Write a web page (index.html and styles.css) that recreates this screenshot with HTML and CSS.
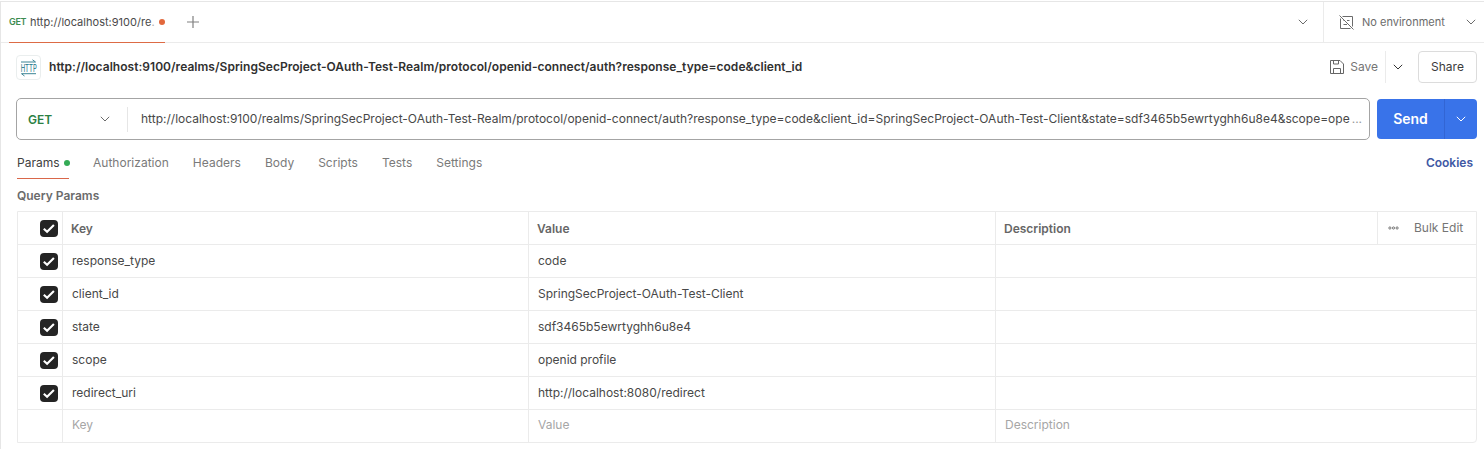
FILE: index.html
```html
<!DOCTYPE html>
<html lang="en">
<head>
<meta charset="utf-8">
<title>Request</title>
<link rel="stylesheet" href="styles.css">
</head>
<body>
<svg class="sprite" aria-hidden="true">
  <symbol id="chevron" viewBox="0 0 10 6"><path d="M.8.8 5 5 9.2.8" fill="none" stroke="currentColor"/></symbol>
  <symbol id="check" viewBox="0 0 17 17"><path d="M3.3 8.7 6.6 11.8 13.4 5" fill="none" stroke="#fff" stroke-width="2.1"/></symbol>
</svg>
<div class="app">
  <header class="tabbar">
    <div class="tab"><span class="tab-method">GET</span><span class="tab-name">http://localhost:9100/re<span class="fade">.</span></span><i class="unsaved"></i></div>
    <svg class="plus" viewBox="0 0 12 12"><path d="M6 0v12M0 6h12" stroke="currentColor" stroke-width="1.2"/></svg>
    <svg class="chev tabs-chev"><use href="#chevron"/></svg>
    <div class="env">
      <svg class="env-icon" viewBox="0 0 15 15" fill="none" stroke="currentColor"><path d="M3.5 1.5h10v10M11.5 13.5h-10V3.5M.5.5l14 14M4.5 5.5h1M8 5.5h2.5M4.5 9.5H8"/></svg>
      <span class="env-name">No environment</span>
      <svg class="chev"><use href="#chevron"/></svg>
    </div>
  </header>

  <section class="titlebar">
    <div class="http-icon"><svg viewBox="0 0 25 25"><path d="M5 7h14.5M16.5 4.8 19.5 7M20 18.700H5.500M8.500 21 5.500 18.700" fill="none" stroke="#3b8494"/><text x="12.700" y="16.700" text-anchor="middle" textLength="16" lengthAdjust="spacingAndGlyphs">HTTP</text></svg></div>
    <h1 class="title">http://localhost:9100/realms/SpringSecProject-OAuth-Test-Realm/protocol/openid-connect/auth?response_type=code&amp;client_id</h1>
    <div class="save">
      <svg class="save-icon" viewBox="0 0 14 14" fill="none" stroke="currentColor"><path d="M.5.5h9.500l3.500 3.500v9.500H.5zM3.500.5v3.500h5v-3.500M3.500 13.500v-5h7v5"/></svg>
      <span>Save</span>
    </div>
    <div class="save-menu"><svg class="chev"><use href="#chevron"/></svg></div>
    <button class="share">Share</button>
  </section>

  <section class="urlrow">
    <div class="urlbox">
      <div class="method"><span>GET</span><svg class="chev"><use href="#chevron"/></svg></div>
      <div class="url"><span class="url-text">http://localhost:9100/realms/SpringSecProject-OAuth-Test-Realm/protocol/openid-connect/auth?response_type=code&amp;client_id=SpringSecProject-OAuth-Test-Client&amp;state=sdf3465b5ewrtyghh6u8e4&amp;scope=ope</span><span class="dots">...</span></div>
    </div>
    <div class="send"><span class="send-label">Send</span><span class="send-menu"><svg class="chev"><use href="#chevron"/></svg></span></div>
  </section>

  <nav class="tabs">
    <span class="active">Params<i class="dot"></i></span><span>Authorization</span><span>Headers</span><span>Body</span><span>Scripts</span><span>Tests</span><span>Settings</span>
    <a class="cookies">Cookies</a>
  </nav>

  <h2 class="subtitle">Query Params</h2>

  <div class="table">
    <div class="row head"><div class="cell check"><svg class="box"><use href="#check"/></svg></div><div class="cell">Key</div><div class="cell">Value</div><div class="cell desc"><span class="desc-label">Description</span><div class="bulk"><svg class="more" viewBox="0 0 11 4" fill="none" stroke="currentColor"><circle cx="1.900" cy="2" r="1.100"/><circle cx="5.500" cy="2" r="1.100"/><circle cx="9.100" cy="2" r="1.100"/></svg><span>Bulk Edit</span></div></div></div>
    <div class="row"><div class="cell check"><svg class="box"><use href="#check"/></svg></div><div class="cell">response_type</div><div class="cell">code</div><div class="cell"></div></div>
    <div class="row"><div class="cell check"><svg class="box"><use href="#check"/></svg></div><div class="cell">client_id</div><div class="cell">SpringSecProject-OAuth-Test-Client</div><div class="cell"></div></div>
    <div class="row"><div class="cell check"><svg class="box"><use href="#check"/></svg></div><div class="cell">state</div><div class="cell">sdf3465b5ewrtyghh6u8e4</div><div class="cell"></div></div>
    <div class="row"><div class="cell check"><svg class="box"><use href="#check"/></svg></div><div class="cell">scope</div><div class="cell">openid profile</div><div class="cell"></div></div>
    <div class="row"><div class="cell check"><svg class="box"><use href="#check"/></svg></div><div class="cell">redirect_uri</div><div class="cell">http://localhost:8080/redirect</div><div class="cell"></div></div>
    <div class="row empty"><div class="cell check"></div><div class="cell">Key</div><div class="cell">Value</div><div class="cell">Description</div></div>
  </div>
</div>
</body>
</html>
```
FILE: styles.css
```css
* { box-sizing: border-box; }
body { margin: 0; background: #fff; color: #6b6b6b; font: 12px/16px Inter, "Liberation Sans", sans-serif; }
svg { display: block; flex: none; }
.sprite { position: absolute; width: 0; height: 0; }
.app { height: 448px; margin-top: 1px; border-top: 1px solid #e6e6e6; border-left: 1px solid #e6e6e6; overflow: hidden; }
.chev { width: 10px; height: 6px; color: #6b6b6b; }

.tabbar { display: flex; align-items: center; height: 41px; padding-left: 8px; border-bottom: 1px solid #ebebeb; }
.tab { display: flex; align-items: center; width: 156px; height: 41px; border-bottom: 1px solid #dd6b45; font-size: 11px; }
.tab-method { width: 21px; font-size: 9px; font-weight: 600; color: #3d8b50; letter-spacing: -.3px; }
.tab-name { letter-spacing: .02px; white-space: nowrap; color: #4a4a4a; }
.fade { color: #aaa; }
.unsaved { width: 6px; height: 6px; margin-left: auto; border-radius: 50%; background: #e2683c; }
.plus { width: 12px; height: 12px; margin-left: 22px; color: #808080; }
.tabs-chev { margin-left: auto; margin-right: 15px; }
.env { display: flex; align-items: center; width: 161px; height: 40px; padding: 0 8px 0 15px; border-left: 1px solid #ebebeb; font-size: 11px; }
.env-icon { width: 15px; height: 15px; margin-right: 8px; }
.env .chev { margin-left: auto; }

.titlebar { display: flex; align-items: center; height: 48px; padding: 0 7px 0 15px; }
.http-icon { width: 25px; height: 25px; border: 1px solid #eaeeee; border-radius: 4px; }
.http-icon svg { width: 25px; height: 25px; margin: -1px; overflow: visible; }
.http-icon text { font: 500 10px Inter, sans-serif; fill: #3b8494; }
.title { margin: 0 0 0 8px; font-size: 12px; font-weight: 600; letter-spacing: .034px; color: #303030; white-space: nowrap; }
.save { display: flex; align-items: center; gap: 6px; margin-left: auto; color: #757575; }
.save-icon { width: 14px; height: 14px; color: #666; }
.save-menu { display: flex; align-items: center; height: 32px; margin-left: 7px; padding: 0 15px 0 7px; border-left: 1px solid #ebebeb; }
.save-menu .chev { color: #333; }
.share { width: 59px; height: 32px; padding: 0; border: 1px solid #dcdcdc; border-radius: 4px; background: #fff; font: inherit; color: #3b3b3b; }

.urlrow { display: flex; align-items: center; gap: 7px; height: 42px; margin: 7px 7px 0 15px; }
.urlbox { display: flex; align-items: center; width: 1354px; height: 42px; border: 1px solid #a4a4a4; border-radius: 5px; }
.method { display: flex; align-items: center; justify-content: space-between; width: 111px; height: 25px; padding: 1px 17px 0 11px; border-right: 1px solid #e6e6e6; color: #2b8043; font-weight: 600; }
.method .chev { margin-top: -1px; }
.url { display: flex; flex: 1; padding-left: 13px; color: #484848; letter-spacing: .004px; white-space: nowrap; }
.dots { color: #999; margin-left: 2px; }
.send { display: flex; width: 100px; height: 40px; border-radius: 4px; background: #3973e9; color: #fff; }
.send-label { width: 67px; line-height: 40px; text-align: center; font-size: 14px; font-weight: 600; }
.send-menu { display: flex; flex: 1; align-items: center; justify-content: center; border-left: 1px solid #3265d4; }
.send .chev { color: #fff; }

.tabs { display: flex; gap: 24px; height: 39px; padding: 0 11px 0 16px; line-height: 46px; letter-spacing: .012px; color: #7a7a7a; }
.tabs > * { height: 39px; }
.tabs .active { display: flex; width: 52px; border-bottom: 1px solid #d9674a; color: #404040; }
.dot { width: 6px; height: 6px; margin: 20px 0 0 4px; border-radius: 50%; background: #34ab55; flex: none; }
.cookies { margin-left: auto; color: #4058a4; font-weight: 600; letter-spacing: 0; }
.subtitle { margin: 9px 0 7px 16px; font-size: 12px; line-height: 16px; font-weight: 600; color: #6b6b6b; }

.table { width: 1460px; margin-left: 16px; border: 1px solid #ebebeb; border-bottom-right-radius: 4px; }
.row { display: grid; grid-template-columns: 44px 466px 467px 1fr; height: 33px; border-bottom: 1px solid #ebebeb; color: #484848; }
.row:last-child { height: 32px; border-bottom: 0; }
.cell { display: flex; align-items: center; padding-left: 9px; border-left: 1px solid #ebebeb; }
.cell.check { padding: 0 0 0 22px; border-left: 0; }
.box { width: 18px; height: 17px; border-radius: 4px; background: #242424; }
.head { color: #666; font-weight: 600; line-height: 18px; }
.head .cell:not(.check) { padding-left: 8px; }
.head .cell:not(.check):not(.desc), .desc-label { padding-top: 1px; }
.bulk { display: flex; align-items: center; width: 99px; height: 32px; margin-left: auto; padding-left: 10px; border-left: 1px solid #ebebeb; font-weight: 400; line-height: 16px; color: #757575; }
.more { width: 11px; height: 4px; margin-right: 15px; }
.empty { color: #a6a6a6; line-height: 16px; }
.empty .cell { padding-bottom: 2px; }
```
